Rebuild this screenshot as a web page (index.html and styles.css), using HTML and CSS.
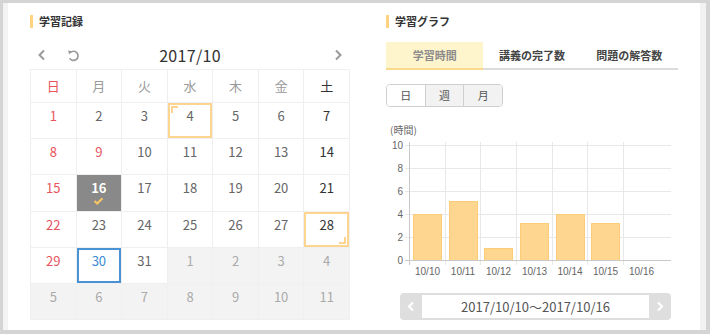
FILE: index.html
```html
<!DOCTYPE html>
<html lang="ja">
<head>
    <meta charset="UTF-8">
    <meta name="viewport" content="width=device-width, initial-scale=1.0">
    <title>学習記録</title>
    <link rel="stylesheet" href="styles.css">
</head>
<body>

<div class="panel">
    <section class="col record">
        <h2 class="heading">学習記録</h2>
        <div class="cal-nav">
            <div class="nav-left">
                <span class="nav-btn">
                    <svg width="9" height="12" viewBox="0 0 9 12"><polyline points="7,1.5 2.5,6 7,10.5" fill="none" stroke="#9a9a9a" stroke-width="2"/></svg>
                </span>
                <span class="nav-btn reload">
                    <svg width="13" height="13" viewBox="0 0 13 13"><path d="M3.2 3.6 A4.6 4.6 0 1 1 2.6 9.4" fill="none" stroke="#9a9a9a" stroke-width="1.7"/><polygon points="1,1.6 5,2.2 2.2,5.4" fill="#9a9a9a"/></svg>
                </span>
            </div>
            <span class="cal-title">2017/10</span>
            <span class="nav-btn next">
                <svg width="9" height="12" viewBox="0 0 9 12"><polyline points="2,1.5 6.5,6 2,10.5" fill="none" stroke="#9a9a9a" stroke-width="2"/></svg>
            </span>
        </div>

        <div class="cal">
            <div class="wd sun">日</div>
            <div class="wd">月</div>
            <div class="wd">火</div>
            <div class="wd">水</div>
            <div class="wd">木</div>
            <div class="wd">金</div>
            <div class="wd sat">土</div>

            <div class="day sun">1</div>
            <div class="day">2</div>
            <div class="day">3</div>
            <div class="day range-start">4</div>
            <div class="day">5</div>
            <div class="day">6</div>
            <div class="day sat">7</div>

            <div class="day sun">8</div>
            <div class="day sun">9</div>
            <div class="day">10</div>
            <div class="day">11</div>
            <div class="day">12</div>
            <div class="day">13</div>
            <div class="day sat">14</div>

            <div class="day sun">15</div>
            <div class="day today">16
                <svg class="check" width="11" height="8" viewBox="0 0 11 8"><polyline points="1.5,4 4.2,6.5 9.5,1.2" fill="none" stroke="#f6c465" stroke-width="2.2"/></svg>
            </div>
            <div class="day">17</div>
            <div class="day">18</div>
            <div class="day">19</div>
            <div class="day">20</div>
            <div class="day sat">21</div>

            <div class="day sun">22</div>
            <div class="day">23</div>
            <div class="day">24</div>
            <div class="day">25</div>
            <div class="day">26</div>
            <div class="day">27</div>
            <div class="day sat range-end">28</div>

            <div class="day sun">29</div>
            <div class="day selected">30</div>
            <div class="day">31</div>
            <div class="day other">1</div>
            <div class="day other">2</div>
            <div class="day other">3</div>
            <div class="day other">4</div>

            <div class="day other">5</div>
            <div class="day other">6</div>
            <div class="day other">7</div>
            <div class="day other">8</div>
            <div class="day other">9</div>
            <div class="day other">10</div>
            <div class="day other">11</div>
        </div>
    </section>

    <section class="col graph">
        <h2 class="heading">学習グラフ</h2>
        <div class="tabs">
            <span class="tab active">学習時間</span>
            <span class="tab">講義の完了数</span>
            <span class="tab">問題の解答数</span>
        </div>

        <div class="seg">
            <span class="seg-btn active">日</span>
            <span class="seg-btn">週</span>
            <span class="seg-btn">月</span>
        </div>

        <svg class="chart" width="292" height="160" viewBox="0 0 292 160">
            <text x="4" y="14" class="unit">(時間)</text>
            <g stroke="#e8e8e8">
                <line x1="19" y1="25.5" x2="285" y2="25.5"/>
                <line x1="19" y1="48.5" x2="285" y2="48.5"/>
                <line x1="19" y1="71.5" x2="285" y2="71.5"/>
                <line x1="19" y1="94.5" x2="285" y2="94.5"/>
                <line x1="19" y1="117.5" x2="285" y2="117.5"/>
                <line x1="59.5" y1="22" x2="59.5" y2="145"/>
                <line x1="94.5" y1="22" x2="94.5" y2="145"/>
                <line x1="130.5" y1="22" x2="130.5" y2="145"/>
                <line x1="166.5" y1="22" x2="166.5" y2="145"/>
                <line x1="201.5" y1="22" x2="201.5" y2="145"/>
                <line x1="237.5" y1="22" x2="237.5" y2="145"/>
            </g>
            <g class="bars">
                <rect x="27.5" y="94.5" width="28" height="46"/>
                <rect x="63.5" y="81.5" width="28" height="59"/>
                <rect x="98.5" y="128.5" width="28" height="12"/>
                <rect x="134.5" y="103.5" width="28" height="37"/>
                <rect x="170.5" y="94.5" width="28" height="46"/>
                <rect x="205.5" y="103.5" width="28" height="37"/>
            </g>
            <g stroke="#c8c8c8">
                <line x1="19" y1="140.5" x2="285" y2="140.5"/>
                <line x1="23.5" y1="22" x2="23.5" y2="145"/>
            </g>
            <g class="ylab">
                <text x="17" y="29">10</text>
                <text x="17" y="52">8</text>
                <text x="17" y="75">6</text>
                <text x="17" y="98">4</text>
                <text x="17" y="121">2</text>
                <text x="17" y="144">0</text>
            </g>
            <g class="xlab">
                <text x="41.5" y="155">10/10</text>
                <text x="77" y="155">10/11</text>
                <text x="112.5" y="155">10/12</text>
                <text x="148.5" y="155">10/13</text>
                <text x="184" y="155">10/14</text>
                <text x="219.5" y="155">10/15</text>
                <text x="255.5" y="155">10/16</text>
            </g>
        </svg>

        <div class="pager">
            <span class="pager-btn">
                <svg width="8" height="11" viewBox="0 0 8 11"><polyline points="6,1.5 2,5.5 6,9.5" fill="none" stroke="#fff" stroke-width="2.2"/></svg>
            </span>
            <span class="pager-range">2017/10/10〜2017/10/16</span>
            <span class="pager-btn">
                <svg width="8" height="11" viewBox="0 0 8 11"><polyline points="2,1.5 6,5.5 2,9.5" fill="none" stroke="#fff" stroke-width="2.2"/></svg>
            </span>
        </div>
    </section>
</div>

</body>
</html>
```

FILE: styles.css
```css
body {
    margin: 0;
    padding: 3px 4px 4px 3px;
    background-color: #d4d4d4;
    font-family: "Noto Sans CJK JP", sans-serif;
    color: #333;
}
.panel {
    display: flex;
    gap: 36px;
    height: 327px;
    box-sizing: border-box;
    padding: 12px 0 0 22px;
    background-color: #fff;
    border-left: 5px solid #f3f3f3;
    border-right: 6px solid #f2f2f2;
}
.record {
    width: 320px;
}
.graph {
    width: 292px;
}
.heading {
    margin: 0;
    padding-left: 6px;
    border-left: 3px solid #ffd382;
    font-size: 11px;
    line-height: 13px;
    font-weight: bold;
    color: #333;
}

/* calendar */
.cal-nav {
    display: grid;
    grid-template-columns: 1fr auto 1fr;
    align-items: center;
    height: 20px;
    margin-top: 17px;
}
.nav-left {
    display: flex;
    align-items: center;
    gap: 21px;
    padding-left: 7px;
}
.nav-btn {
    display: flex;
}
.nav-btn.next {
    justify-self: end;
    margin-right: 7px;
}
.cal-title {
    font-size: 16px;
    line-height: 20px;
    color: #333;
    letter-spacing: 0.3px;
}
.cal {
    display: grid;
    grid-template-columns: repeat(7, 1fr);
    grid-template-rows: 33px repeat(6, 1fr);
    height: 251px;
    margin-top: 4px;
    border-top: 1px solid #efefef;
    border-left: 1px solid #efefef;
    box-sizing: border-box;
}
.wd,
.day {
    border-right: 1px solid #efefef;
    border-bottom: 1px solid #efefef;
    text-align: center;
    font-size: 13px;
    color: #666;
}
.wd {
    line-height: 32px;
    color: #9a9a9a;
}
.day {
    position: relative;
    padding-top: 5px;
    line-height: 16px;
}
.wd.sun,
.day.sun {
    color: #e8535d;
}
.wd.sat,
.day.sat {
    color: #333;
}
.day.other {
    background-color: #f3f3f3;
    border-color: #f0f0f0;
    color: #aaa;
}
.day.today {
    background-color: #898989;
    color: #fff;
    font-weight: bold;
}
.check {
    display: block;
    margin: 1px auto 0;
}
.day.selected {
    box-shadow: inset 0 0 0 2px #4b92d4;
    color: #3b8bd3;
}
.range-start,
.range-end {
    box-shadow: inset 0 0 0 2px #fdd590;
}
.range-start::before,
.range-end::before {
    content: "";
    position: absolute;
    width: 5px;
    height: 5px;
    border: 0 solid #fdd590;
}
.range-start::before {
    top: 3px;
    left: 3px;
    border-top-width: 2px;
    border-left-width: 2px;
}
.range-end::before {
    right: 3px;
    bottom: 3px;
    border-right-width: 2px;
    border-bottom-width: 2px;
}

/* graph */
.tabs {
    display: flex;
    margin-top: 14px;
}
.tab {
    flex: 1;
    height: 26px;
    line-height: 26px;
    text-align: center;
    font-size: 11px;
    font-weight: bold;
    color: #444;
    border-bottom: 2px solid #dcdcdc;
}
.tab.active {
    background-color: #fff5cc;
    border-bottom-color: #fbd98a;
    color: #8c8c8c;
}
.seg {
    display: flex;
    width: 117px;
    height: 23px;
    margin-top: 14px;
    border: 1px solid #cfcfcf;
    border-radius: 4px;
    box-sizing: border-box;
    overflow: hidden;
}
.seg-btn {
    flex: 1;
    text-align: center;
    font-size: 11px;
    line-height: 21px;
    color: #555;
    background-color: #f2f2f2;
    border-left: 1px solid #cfcfcf;
}
.seg-btn.active {
    background-color: #fff;
    border-left: none;
}
.chart {
    display: block;
    margin-top: 13px;
}
.chart text {
    font-family: "Liberation Sans", sans-serif;
    font-size: 10px;
    fill: #666;
}
.chart .unit {
    font-family: "Noto Sans CJK JP", sans-serif;
    font-size: 10px;
}
.ylab text {
    text-anchor: end;
}
.xlab text {
    text-anchor: middle;
}
.bars rect {
    fill: #fed68f;
    stroke: #fccd78;
    stroke-width: 1;
}
.pager {
    display: flex;
    width: 271px;
    height: 27px;
    margin: 13px 0 0 14px;
    padding: 2px 0;
    box-sizing: border-box;
    background-color: #dedede;
    border-radius: 4px;
}
.pager-btn {
    display: flex;
    align-items: center;
    justify-content: center;
    width: 22px;
}
.pager-range {
    flex: 1;
    background-color: #fff;
    text-align: center;
    font-size: 13px;
    line-height: 23px;
    color: #555;
}
```
